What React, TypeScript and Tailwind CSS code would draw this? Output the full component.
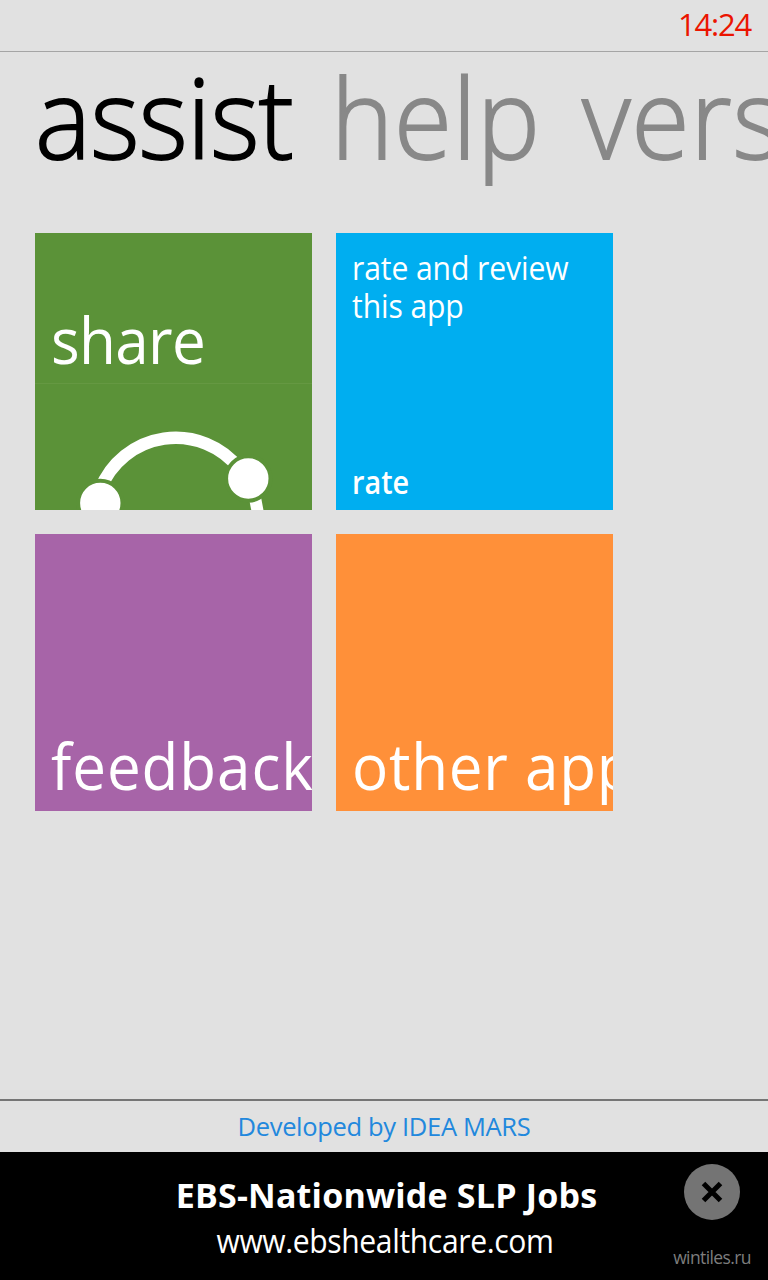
import type { ReactNode } from "react";

const ShareIcon = () => {
  return (
    <svg
      className="block h-[126px] w-full"
      viewBox="0 0 277 126"
      fill="none"
      stroke="#fff"
      strokeWidth="12.5"
    >
      <path d="M65 106 A81 81 0 0 1 205 85.5" />
      <path d="M218.7 107 L223.3 131" strokeWidth="12" />
      <g fill="#fff" stroke="#5b9238" strokeWidth="4">
        <circle cx="65.3" cy="119" r="22.2" />
        <circle cx="213.3" cy="94.5" r="22.2" />
      </g>
    </svg>
  );
};

type TileProps = {
  className: string;
  children: ReactNode;
};

const Tile = ({ className, children }: TileProps) => {
  return (
    <div
      className={`flex h-[277px] w-[277px] flex-col overflow-hidden text-white ${className}`}
    >
      {children}
    </div>
  );
};

const App = () => {
  return (
    <div className="flex h-[1280px] w-[768px] flex-col overflow-hidden bg-[#e1e1e1] font-['Open_Sans',sans-serif]">
      <header className="flex h-[52px] shrink-0 justify-end border-b border-[#a5a5a5] pr-[17px]">
        <span className="text-[31px] leading-[49px] tracking-[-1.2px] text-[#eb1400]">
          14:24
        </span>
      </header>

      <nav className="mt-1 flex h-[120px] shrink-0 pl-[35px] text-[110px] leading-[121px] font-light whitespace-nowrap text-[#888] [-webkit-text-stroke-width:1.8px]">
        <span className="w-[296px] shrink-0 origin-left scale-x-96 tracking-[-0.8px] text-black">
          assist
        </span>
        <span className="w-[251px] shrink-0 origin-left scale-x-96 tracking-[0.6px]">
          help
        </span>
        <span className="origin-left scale-x-96 tracking-[1px]">version</span>
      </nav>

      <main className="grow pt-[57px] pl-[35px]">
        <div className="grid grid-cols-[277px_277px] gap-6">
          <Tile className="bg-[#5b9238]">
            <div className="flex h-[151px] shrink-0 items-end border-b border-[#659842] pb-[3px] pl-4">
              <span className="origin-left scale-x-94 text-[64px] leading-[80px] tracking-[-0.7px]">
                share
              </span>
            </div>
            <ShareIcon />
          </Tile>
          <Tile className="justify-between bg-[#00aef0] px-4 pt-4 pb-[9px] text-[32px] leading-[38px]">
            <p className="origin-left scale-x-94 tracking-[-0.1px] whitespace-nowrap">
              rate and review
              <br />
              this app
            </p>
            <p className="origin-left scale-x-90 font-semibold">rate</p>
          </Tile>
          <Tile className="justify-end bg-[#a764a8] pb-[5px] pl-4">
            <span className="origin-left scale-x-94 text-[64px] leading-[80px] tracking-[1px] whitespace-nowrap">
              feedback
            </span>
          </Tile>
          <Tile className="justify-end bg-[#ff9039] pb-[5px] pl-4">
            <span className="origin-left scale-x-94 text-[64px] leading-[80px] tracking-[0.8px] whitespace-nowrap">
              other apps
            </span>
          </Tile>
        </div>
      </main>

      <div className="h-[53px] shrink-0 border-t-2 border-[#757575] text-center text-[25.5px] leading-[51px] tracking-[-0.33px] text-[#2288dd]">
        Developed by IDEA MARS
      </div>

      <footer className="relative h-32 shrink-0 bg-black pt-5 text-center text-white">
        <p className="pl-[5px] text-[34px] leading-[46px] font-bold tracking-[0.2px]">
          EBS-Nationwide SLP Jobs
        </p>
        <p className="scale-x-94 pl-[2px] text-[32px] leading-[45px] tracking-[-0.4px]">
          www.ebshealthcare.com
        </p>
        <button className="absolute top-[12px] right-[28px] flex h-14 w-14 items-center justify-center rounded-full bg-[#747474]">
          <svg width="22" height="22" viewBox="0 0 22 22">
            <path
              d="M2.5 2.5 L19.5 19.5 M19.5 2.5 L2.5 19.5"
              stroke="#000"
              strokeWidth="5"
            />
          </svg>
        </button>
        <span className="absolute right-[17px] bottom-[11px] text-[17.5px] leading-[24px] tracking-[-0.6px] text-[#7d7d7d]">
          wintiles.ru
        </span>
      </footer>
    </div>
  );
};

export default App;
